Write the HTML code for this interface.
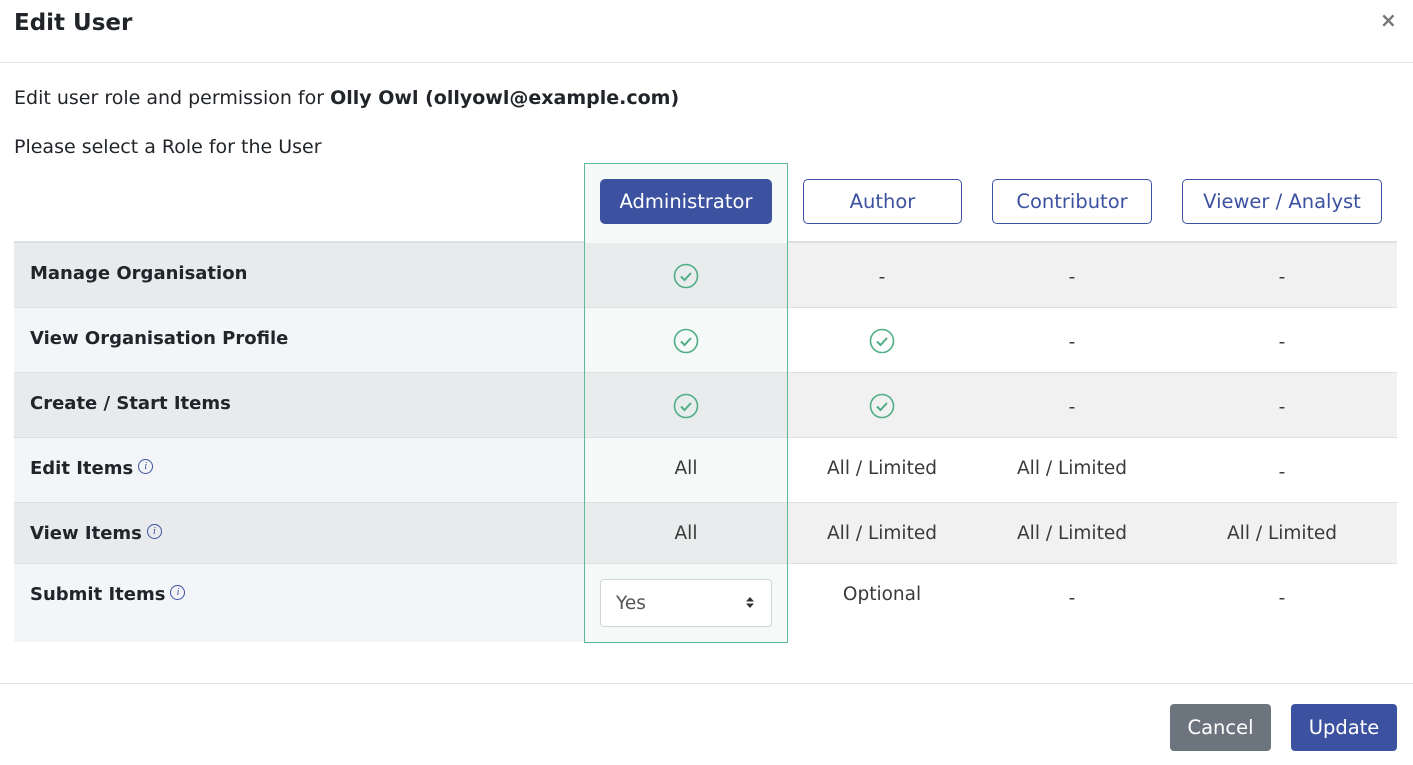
<!DOCTYPE html>
<html><head><style>
body{margin:0;width:1413px;height:765px;background:#fff;font-family:"DejaVu Sans","Liberation Sans",sans-serif;color:#212529;position:relative;overflow:hidden}
.a{position:absolute}
.t{font-size:19px}
.c{position:absolute;text-align:center;font-size:18.5px;color:#3a3a3a}
.btn{position:absolute;top:179px;height:45px;border:1px solid #3c52a0;border-radius:5px;box-sizing:border-box;color:#3c52a0;font-size:19.5px;display:flex;align-items:center;justify-content:center;background:#fff}
.lbl{position:absolute;left:14px;width:570px;font-weight:bold;font-size:18px;padding-left:16px;box-sizing:border-box}
.row{position:absolute;left:14px;width:1383px;border-top:1px solid #dedfe2}
.chk{position:absolute}
.info{display:inline-block;width:13px;height:13px;border:1px solid #3c52a0;border-radius:50%;font-size:10px;color:#3c52a0;text-align:center;line-height:13px;font-style:italic;font-weight:normal;vertical-align:top;margin-left:5px;margin-top:1px;font-family:"Liberation Serif",serif}
</style></head><body>
<div class="a" style="left:14px;top:10px;font-size:23px;font-weight:bold">Edit User</div>
<div class="a" style="left:1380px;top:8px;font-size:20px;color:#777;font-weight:bold">×</div>
<div class="a" style="left:0;top:62px;width:1413px;border-top:1px solid #e3e3e3"></div>
<div class="a t" style="left:14px;top:87px">Edit user role and permission for <b>Olly Owl (ollyowl@example.com)</b></div>
<div class="a t" style="left:14px;top:136px">Please select a Role for the User</div>

<div class="row" style="top:241px;height:66px;background:#f1f1f1;border-top:2px solid #dedfe2"></div>
<div class="row" style="top:307px;height:65px;background:#fff"></div>
<div class="row" style="top:372px;height:65px;background:#f1f1f1"></div>
<div class="row" style="top:437px;height:65px;background:#fff"></div>
<div class="row" style="top:502px;height:61px;background:#f1f1f1"></div>
<div class="row" style="top:563px;height:79px;background:#fff"></div>
<div class="a" style="left:14px;top:243px;width:570px;height:64px;background:#e9eaee"></div>
<div class="a" style="left:14px;top:308px;width:570px;height:64px;background:#f4f5f9"></div>
<div class="a" style="left:14px;top:373px;width:570px;height:64px;background:#e9eaee"></div>
<div class="a" style="left:14px;top:438px;width:570px;height:64px;background:#f4f5f9"></div>
<div class="a" style="left:14px;top:503px;width:570px;height:60px;background:#e9eaee"></div>
<div class="a" style="left:14px;top:564px;width:570px;height:78px;background:#f4f5f9"></div>
<div class="a" style="left:584px;top:163px;width:202px;height:478px;border:1px solid #5fba94;background:#f5f9f8"></div>
<div class="a" style="left:585px;top:243px;width:202px;height:64px;background:#e9ecec"></div>
<div class="a" style="left:585px;top:373px;width:202px;height:64px;background:#e9ecec"></div>
<div class="a" style="left:585px;top:503px;width:202px;height:60px;background:#e9ecec"></div>
<div class="a" style="left:585px;top:307px;width:202px;border-top:1px solid #dedfe2"></div>
<div class="a" style="left:585px;top:372px;width:202px;border-top:1px solid #dedfe2"></div>
<div class="a" style="left:585px;top:437px;width:202px;border-top:1px solid #dedfe2"></div>
<div class="a" style="left:585px;top:502px;width:202px;border-top:1px solid #dedfe2"></div>
<div class="a" style="left:585px;top:563px;width:202px;border-top:1px solid #dedfe2"></div>

<div class="btn" style="left:600px;width:172px;background:#3c52a0;color:#fff">Administrator</div>
<div class="btn" style="left:803px;width:159px">Author</div>
<div class="btn" style="left:992px;width:160px">Contributor</div>
<div class="btn" style="left:1182px;width:200px">Viewer / Analyst</div>

<div class="lbl" style="top:263px">Manage Organisation</div>
<div class="lbl" style="top:328px">View Organisation Profile</div>
<div class="lbl" style="top:393px">Create / Start Items</div>
<div class="lbl" style="top:458px">Edit Items<span class="info">i</span></div>
<div class="lbl" style="top:523px">View Items<span class="info">i</span></div>
<div class="lbl" style="top:584px">Submit Items<span class="info">i</span></div>

<svg class="chk" style="left:673px;top:263px" width="26" height="26" viewBox="0 0 26 26"><circle cx="13" cy="13" r="11.5" fill="none" stroke="#4fae85" stroke-width="1.6"/><path d="M8 13.5l3.5 3.5 6.5-7" fill="none" stroke="#4fae85" stroke-width="2"/></svg>
<svg class="chk" style="left:673px;top:328px" width="26" height="26" viewBox="0 0 26 26"><circle cx="13" cy="13" r="11.5" fill="none" stroke="#4fae85" stroke-width="1.6"/><path d="M8 13.5l3.5 3.5 6.5-7" fill="none" stroke="#4fae85" stroke-width="2"/></svg>
<svg class="chk" style="left:869px;top:328px" width="26" height="26" viewBox="0 0 26 26"><circle cx="13" cy="13" r="11.5" fill="none" stroke="#4fae85" stroke-width="1.6"/><path d="M8 13.5l3.5 3.5 6.5-7" fill="none" stroke="#4fae85" stroke-width="2"/></svg>
<svg class="chk" style="left:673px;top:393px" width="26" height="26" viewBox="0 0 26 26"><circle cx="13" cy="13" r="11.5" fill="none" stroke="#4fae85" stroke-width="1.6"/><path d="M8 13.5l3.5 3.5 6.5-7" fill="none" stroke="#4fae85" stroke-width="2"/></svg>
<svg class="chk" style="left:869px;top:393px" width="26" height="26" viewBox="0 0 26 26"><circle cx="13" cy="13" r="11.5" fill="none" stroke="#4fae85" stroke-width="1.6"/><path d="M8 13.5l3.5 3.5 6.5-7" fill="none" stroke="#4fae85" stroke-width="2"/></svg>

<div class="c" style="left:787px;width:190px;top:267px">-</div>
<div class="c" style="left:977px;width:190px;top:267px">-</div>
<div class="c" style="left:1167px;width:230px;top:267px">-</div>
<div class="c" style="left:977px;width:190px;top:332px">-</div>
<div class="c" style="left:1167px;width:230px;top:332px">-</div>
<div class="c" style="left:977px;width:190px;top:397px">-</div>
<div class="c" style="left:1167px;width:230px;top:397px">-</div>
<div class="c" style="left:585px;width:202px;top:458px">All</div>
<div class="c" style="left:787px;width:190px;top:458px">All / Limited</div>
<div class="c" style="left:977px;width:190px;top:458px">All / Limited</div>
<div class="c" style="left:1167px;width:230px;top:462px">-</div>
<div class="c" style="left:585px;width:202px;top:523px">All</div>
<div class="c" style="left:787px;width:190px;top:523px">All / Limited</div>
<div class="c" style="left:977px;width:190px;top:523px">All / Limited</div>
<div class="c" style="left:1167px;width:230px;top:523px">All / Limited</div>
<div class="c" style="left:787px;width:190px;top:584px">Optional</div>
<div class="c" style="left:977px;width:190px;top:588px">-</div>
<div class="c" style="left:1167px;width:230px;top:588px">-</div>

<div class="a" style="left:600px;top:579px;width:170px;height:46px;border:1px solid #ced4da;border-radius:4px;background:#fff"></div>
<div class="a" style="left:616px;top:593px;font-size:18.5px;color:#555">Yes</div>
<svg class="a" style="left:745px;top:596px" width="10" height="13" viewBox="0 0 10 13"><path d="M1 5.5L5 1l4 4.5z M1 7.5L5 12l4-4.5z" fill="#333"/></svg>

<div class="a" style="left:0;top:683px;width:1413px;border-top:1px solid #e3e3e3"></div>
<div class="a" style="left:1170px;top:704px;width:101px;height:47px;background:#6c757d;border-radius:4px;color:#fff;font-size:19.5px;display:flex;align-items:center;justify-content:center">Cancel</div>
<div class="a" style="left:1291px;top:704px;width:106px;height:47px;background:#3c52a0;border-radius:4px;color:#fff;font-size:19.5px;display:flex;align-items:center;justify-content:center">Update</div>
</body></html>
